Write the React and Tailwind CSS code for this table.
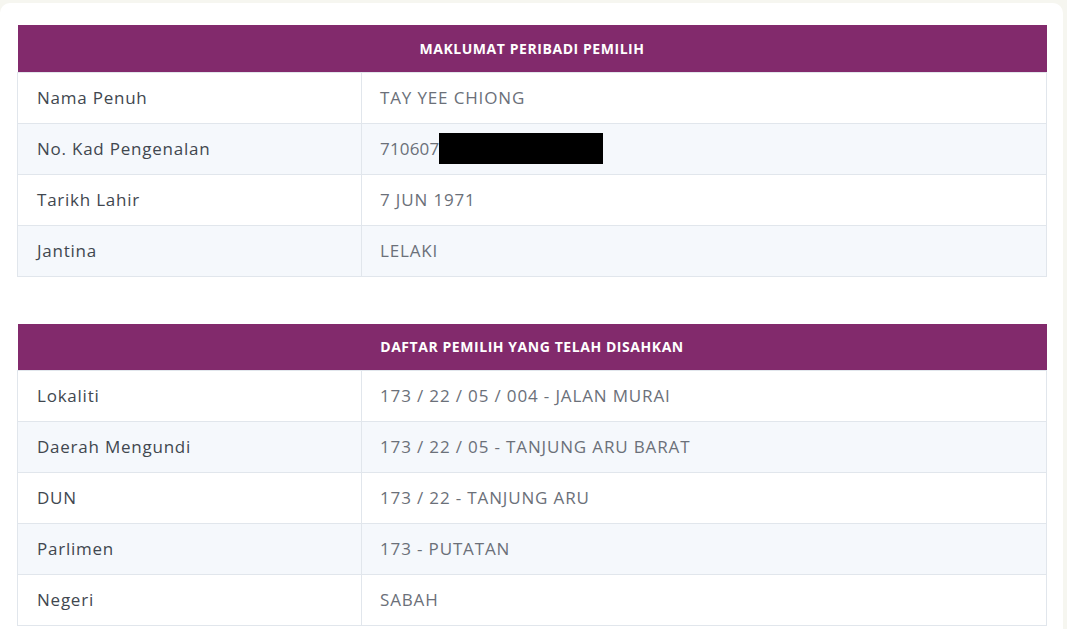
import React from 'react';

const personal = [
  { label: 'Nama Penuh', value: 'TAY YEE CHIONG' },
  { label: 'No. Kad Pengenalan', value: '710607', redacted: true },
  { label: 'Tarikh Lahir', value: '7 JUN 1971' },
  { label: 'Jantina', value: 'LELAKI' },
];

const daftar = [
  { label: 'Lokaliti', value: '173 / 22 / 05 / 004 - JALAN MURAI' },
  { label: 'Daerah Mengundi', value: '173 / 22 / 05 - TANJUNG ARU BARAT' },
  { label: 'DUN', value: '173 / 22 - TANJUNG ARU' },
  { label: 'Parlimen', value: '173 - PUTATAN' },
  { label: 'Negeri', value: 'SABAH' },
];

const InfoTable = ({ title, rows }) => (
  <table className="w-full border-collapse table-fixed">
    <colgroup>
      <col className="w-[344px]" />
      <col />
    </colgroup>
    <thead>
      <tr>
        <th colSpan={2} className="h-[47px] bg-[#822a6c] text-white text-[14px] font-bold uppercase text-center tracking-[0.04em]">
          {title}
        </th>
      </tr>
    </thead>
    <tbody>
      {rows.map((r, i) => (
        <tr key={r.label} className={i % 2 === 1 ? 'bg-[#f5f8fc]' : 'bg-white'}>
          <td className="h-[51px] border border-[#e1e6ec] pl-[19px] text-[17px] font-medium text-[#41474f] tracking-[0.045em]">
            {r.label}
          </td>
          <td className={`h-[51px] border border-[#e1e6ec] pl-[18px] text-[17px] text-[#6b7079] ${r.redacted ? 'tracking-[0.01em]' : 'tracking-[0.05em]'}`}>
            <span className="inline-flex items-center">
              {r.value}
              {r.redacted && <span className="inline-block w-[164px] h-[31px] bg-black" />}
            </span>
          </td>
        </tr>
      ))}
    </tbody>
  </table>
);

export default function App() {
  return (
    <div className="min-h-[629px] bg-[#f6f6f0] pt-[3px] pr-[4px] font-['Open_Sans',sans-serif]">
      <div className="bg-white rounded-[10px] pt-[22px] pl-[17px] pr-[16px] pb-[20px] flex flex-col gap-[47px]">
        <InfoTable title="Maklumat Peribadi Pemilih" rows={personal} />
        <InfoTable title="Daftar Pemilih Yang Telah Disahkan" rows={daftar} />
      </div>
    </div>
  );
}
